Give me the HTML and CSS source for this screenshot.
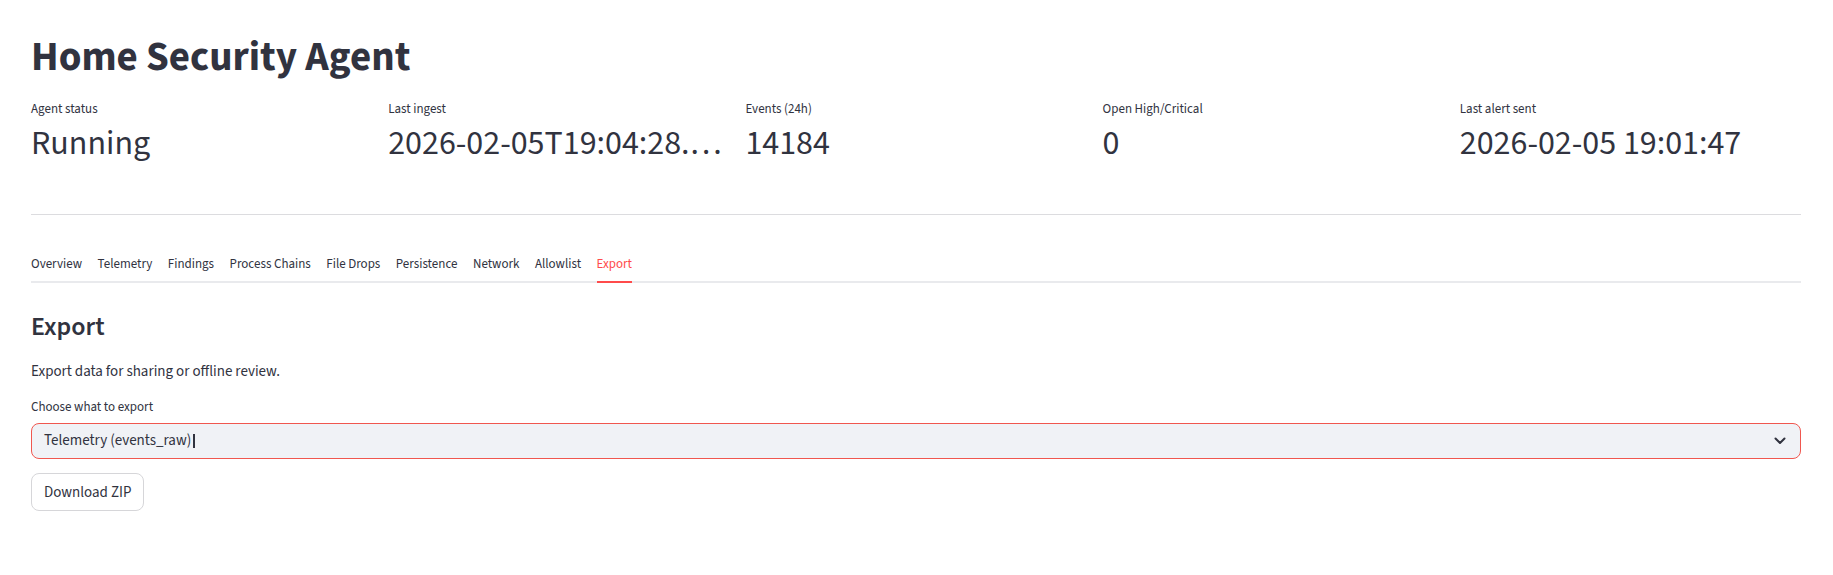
FILE: index.html
```html
<!DOCTYPE html>
<html lang="en">
<head>
<meta charset="utf-8">
<title>Home Security Agent</title>
<link rel="stylesheet" href="styles.css">
</head>
<body>
<main class="main">
  <h1 class="title">Home Security Agent</h1>

  <section class="metrics">
    <div class="metric">
      <div class="metric-label">Agent status</div>
      <div class="metric-value">Running</div>
    </div>
    <div class="metric">
      <div class="metric-label">Last ingest</div>
      <div class="metric-value metric-value-truncate">2026-02-05T19:04:28.913406+00:00</div>
    </div>
    <div class="metric">
      <div class="metric-label">Events (24h)</div>
      <div class="metric-value">14184</div>
    </div>
    <div class="metric">
      <div class="metric-label">Open High/Critical</div>
      <div class="metric-value">0</div>
    </div>
    <div class="metric">
      <div class="metric-label">Last alert sent</div>
      <div class="metric-value">2026-02-05 19:01:47</div>
    </div>
  </section>

  <hr class="divider">

  <nav class="tabs">
    <span class="tab">Overview</span>
    <span class="tab">Telemetry</span>
    <span class="tab">Findings</span>
    <span class="tab">Process Chains</span>
    <span class="tab">File Drops</span>
    <span class="tab">Persistence</span>
    <span class="tab">Network</span>
    <span class="tab">Allowlist</span>
    <span class="tab tab-active">Export</span>
  </nav>

  <h3 class="section-title">Export</h3>
  <p class="section-text">Export data for sharing or offline review.</p>

  <div class="field">
    <div class="field-label">Choose what to export</div>
    <div class="select">
      <span class="select-value">Telemetry (events_raw)<span class="caret"></span></span>
      <svg class="chevron" width="12" height="8" viewBox="0 0 12 8" aria-hidden="true">
        <path d="M1.5 1.5 L6 6 L10.5 1.5" fill="none" stroke="#31333f" stroke-width="2" stroke-linecap="round" stroke-linejoin="round"/>
      </svg>
    </div>
  </div>

  <button class="button" type="button">Download ZIP</button>
</main>
</body>
</html>
```

FILE: styles.css
```css
* { box-sizing: border-box; }

html, body {
  margin: 0;
  padding: 0;
  background: #ffffff;
}

body {
  font-family: "Source Sans Pro", "Source Sans 3", Lato, "Liberation Sans", sans-serif;
  color: #31333f;
}

.main {
  padding: 31px 32px 0 31px;
  display: flex;
  flex-direction: column;
  align-items: stretch;
}

.title {
  margin: 0;
  font-size: 41px;
  line-height: 52px;
  font-weight: 700;
}

.metrics {
  margin-top: 16px;
  display: grid;
  grid-template-columns: repeat(5, minmax(0, 1fr));
  column-gap: 16px;
}

.metric {
  min-width: 0;
}

.metric-label {
  font-size: 13px;
  line-height: 20px;
}

.metric-value {
  margin-top: 3px;
  font-size: 34px;
  line-height: 44px;
  white-space: nowrap;
}

.metric-value-truncate {
  overflow: hidden;
  text-overflow: ellipsis;
}

.divider {
  margin: 48px 0 0 0;
  border: 0;
  border-top: 1px solid #dcdcdf;
  height: 0;
}

.tabs {
  margin-top: 29px;
  display: flex;
  gap: 15.5px;
  border-bottom: 2px solid #e9eaed;
}

.tab {
  position: relative;
  padding-top: 4px;
  font-size: 13px;
  line-height: 33px;
  white-space: nowrap;
}

.tab-active {
  color: #ff4b4b;
}

.tab-active::after {
  content: "";
  position: absolute;
  left: 0;
  right: 0;
  bottom: -2px;
  height: 2px;
  background: #ff4b4b;
}

.section-title {
  margin: 26px 0 0 0;
  font-size: 26px;
  line-height: 36px;
  font-weight: 600;
}

.section-text {
  margin: 15px 0 0 0;
  font-size: 15px;
  line-height: 24px;
}

.field {
  margin-top: 13px;
  display: flex;
  flex-direction: column;
}

.field-label {
  font-size: 13px;
  line-height: 20px;
}

.select {
  margin-top: 6px;
  height: 36px;
  display: flex;
  align-items: center;
  justify-content: space-between;
  padding: 0 14px 0 12px;
  background: #f0f2f6;
  border: 1px solid #f0574f;
  border-radius: 8px;
}

.select-value {
  display: flex;
  align-items: center;
  font-size: 15px;
  line-height: 24px;
}

.caret {
  display: inline-block;
  width: 2px;
  height: 14px;
  margin-left: 2px;
  background: #31333f;
}

.chevron {
  display: block;
}

.button {
  align-self: flex-start;
  margin-top: 14px;
  height: 38px;
  padding: 0 12px;
  background: #ffffff;
  border: 1px solid #d6d6d9;
  border-radius: 8px;
  font-family: inherit;
  font-size: 15px;
  color: #31333f;
}
```
